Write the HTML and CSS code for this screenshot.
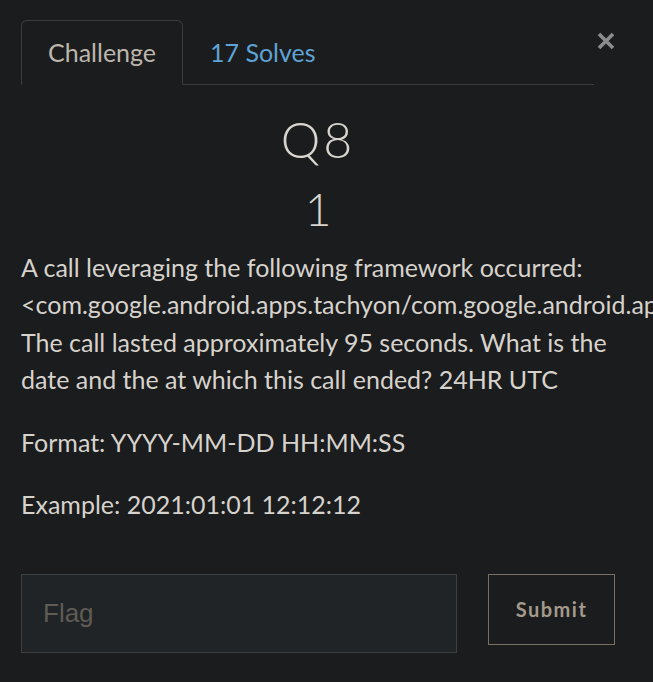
FILE: index.html
```html
<!DOCTYPE html>
<html>
<head>
<meta charset="utf-8">
<link rel="stylesheet" href="styles.css">
</head>
<body>
<div class="modal">
  <button class="close" aria-label="Close">
    <svg width="18" height="18" viewBox="0 0 18 18"><path d="M2 2 L16 16 M16 2 L2 16" stroke="#8c8c8c" stroke-width="3.6" stroke-linecap="butt"/></svg>
  </button>
  <nav class="tabs">
    <a class="tab active">Challenge</a>
    <a class="tab link">17 Solves</a>
  </nav>
  <h2 class="name">Q8</h2>
  <h3 class="value">1</h3>
  <div class="desc">
    <p>A call leveraging the following framework occurred: <span class="nowrap">&lt;com.google.android.apps.tachyon/com.google.android.apps.tachyon.call.CallActivity&gt;</span> The call lasted approximately 95 seconds. What is the date and the at which this call ended? 24HR UTC</p>
    <p>Format: YYYY-MM-DD HH:MM:SS</p>
    <p>Example: 2021:01:01 12:12:12</p>
  </div>
  <form class="submit-row">
    <input class="flag" type="text" placeholder="Flag">
    <button class="submit" type="button">Submit</button>
  </form>
</div>
</body>
</html>
```
FILE: styles.css
```css
html, body {
  margin: 0;
  padding: 0;
  background: #1b1c1e;
  overflow: hidden;
  height: 100%;
}
body {
  font-family: Lato, "Liberation Sans", sans-serif;
  color: #d6d2cc;
  font-size: 25px;
  line-height: 1.5;
}
.modal {
  position: relative;
  padding: 20px 38px 0 21px;
  width: 594px;
}
.close {
  position: absolute;
  top: 32px;
  right: 38px;
  background: none;
  border: 0;
  padding: 0;
  width: 18px;
  height: 18px;
  display: block;
  cursor: pointer;
}
.close svg { display: block; }
.tabs {
  display: flex;
  border-bottom: 1px solid #3a3d40;
  margin-right: 21px;
}
.tab {
  display: block;
  padding: 12.5px 26px 12.5px 26px;
  border: 1px solid transparent;
  border-top-left-radius: 6px;
  border-top-right-radius: 6px;
  margin-bottom: -1px;
  text-decoration: none;
}
.tab.active {
  color: #bdb6ac;
  border-color: #3a3d40 #3a3d40 #1b1c1e;
  background: #1b1c1e;
}
.tab.link {
  color: #5fa3d6;
}
.name {
  margin: 24px 0 0;
  text-align: center;
  font-weight: 300;
  font-size: 50px;
  letter-spacing: 3px;
  line-height: 1.2;
  color: #d8d4ce;
}
.value {
  margin: 12px 0 0;
  text-align: center;
  font-weight: 300;
  font-size: 46px;
  line-height: 1.2;
  color: #d8d4ce;
}
.desc {
  margin-top: 13px;
}
.desc p {
  margin: 0 0 25px;
}
.nowrap { white-space: nowrap; }
.submit-row {
  display: flex;
  align-items: flex-start;
  gap: 31px;
  margin-top: 50px;
}
.flag {
  box-sizing: border-box;
  width: 436px;
  height: 79px;
  background: #202426;
  border: 1px solid #3b4043;
  padding: 0 21px;
  font-family: "Liberation Sans", Arial, sans-serif;
  font-size: 26px;
  color: #d6d2cc;
  outline: none;
}
.flag::placeholder {
  color: #5f5b55;
}
.submit {
  box-sizing: border-box;
  width: 127px;
  height: 71px;
  background: transparent;
  border: 1px solid #7a7062;
  color: #a39a8c;
  font-family: Lato, sans-serif;
  font-weight: 700;
  font-size: 20px;
  letter-spacing: 1.5px;
}
```
